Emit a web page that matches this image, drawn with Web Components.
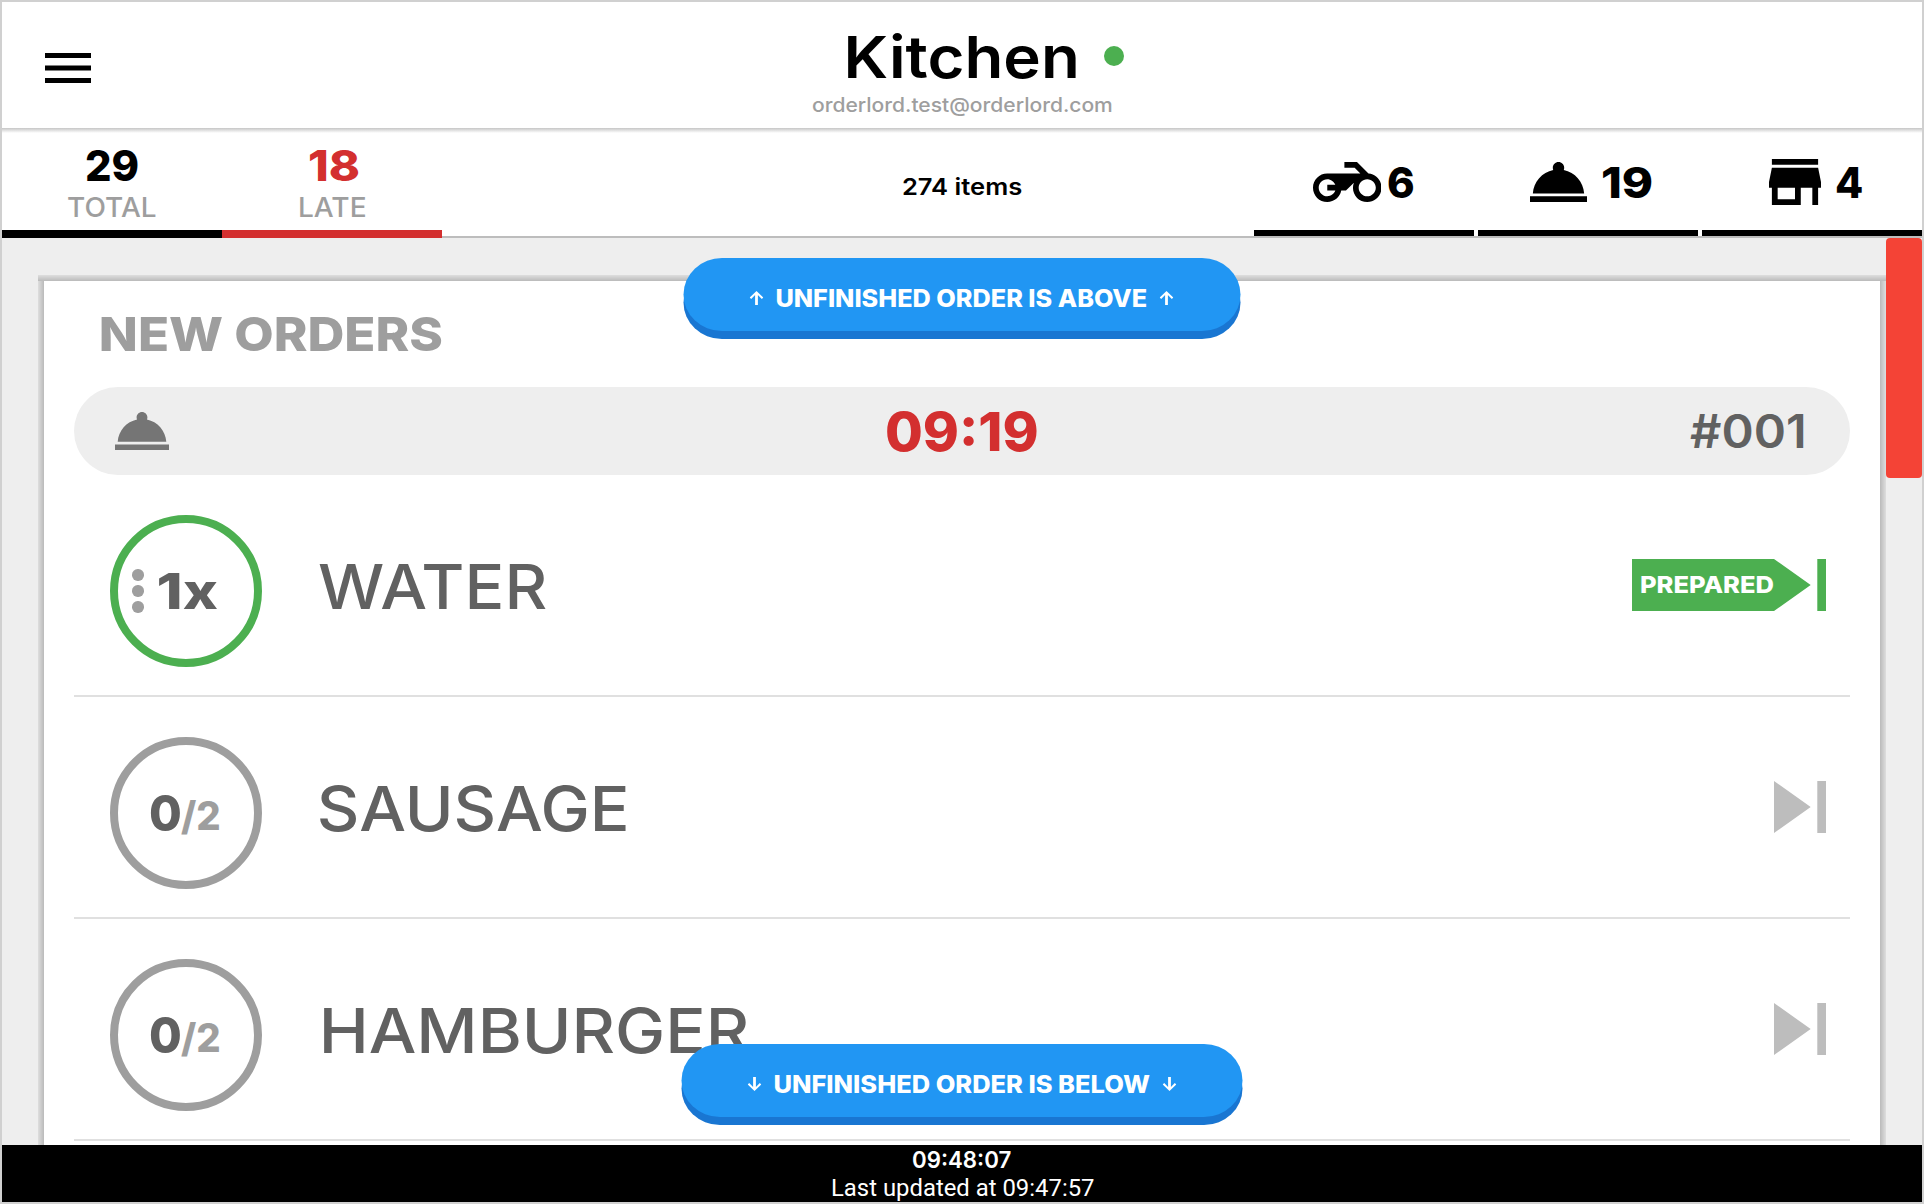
<!DOCTYPE html>
<html lang="en">
<head>
<meta charset="utf-8">
<title>Kitchen</title>
<style>
html,body{margin:0;height:100%;overflow:hidden;font-family:Inter,"Open Sans",sans-serif}
</style>
</head>
<body>
<kitchen-app></kitchen-app>
<script>
const define = (name, html, setup) => {
  const t = document.createElement('template');
  t.innerHTML = html;
  customElements.define(name, class extends HTMLElement {
    connectedCallback() {
      if (this.shadowRoot) return;
      this.attachShadow({mode: 'open'}).append(t.content.cloneNode(true));
      if (setup) setup(this, this.shadowRoot);
    }
  });
};

// Label whose box is as wide as its ink (w) and as tall as its capitals.
const pen = document.createElement('canvas').getContext('2d');
class CapText extends HTMLElement {
  connectedCallback() {
    if (this.shadowRoot) return;
    const size = +this.getAttribute('size'), w = +this.getAttribute('w');
    const weight = this.getAttribute('weight') || 800;
    const font = this.getAttribute('font') || 'Inter';
    const text = this.getAttribute('text');
    const cap = Math.round(size * .727);
    pen.font = `${weight} ${size}px ${font}`;
    const m = pen.measureText(text);
    const s = w / (m.actualBoundingBoxRight + m.actualBoundingBoxLeft);
    this.attachShadow({mode: 'open'}).innerHTML = `<style>
      :host{display:block;flex:none;width:${w}px;height:${cap}px}
      span{display:block;width:max-content;white-space:pre;font:${weight} ${size}px/${cap}px ${font},sans-serif;
        transform-origin:0 50%;transform:translateX(${m.actualBoundingBoxLeft * s}px) scaleX(${s})}
      </style><span></span>`;
    this.shadowRoot.querySelector('span').textContent = text;
  }
}
customElements.define('cap-text', CapText);

const ICONS = {
  menu: ['3 6 18 12', 'M3 18h18v-2H3v2zm0-5h18v-2H3v2zm0-7v2h18V6H3z'],
  bike: ['0 5 24 14', 'M19.44 9.03L15.41 5H11v2h3.59l2 2H5c-2.8 0-5 2.2-5 5s2.2 5 5 5c2.46 0 4.45-1.69 4.9-4h1.65l2.77-2.77c-.21.54-.32 1.14-.32 1.77 0 2.8 2.2 5 5 5s5-2.2 5-5c0-2.65-1.97-4.77-4.56-4.97zM7.82 15C7.4 16.15 6.28 17 5 17c-1.63 0-3-1.37-3-3s1.37-3 3-3c1.28 0 2.4.85 2.82 2H5v2h2.82zM19 17c-1.66 0-3-1.34-3-3s1.34-3 3-3 3 1.34 3 3-1.34 3-3 3z'],
  dome: ['2 5 20 14', 'M2 17h20v2H2zm11.84-9.21c.1-.24.16-.51.16-.79 0-1.1-.9-2-2-2s-2 .9-2 2c0 .28.06.55.16.79C6.25 8.6 3.27 11.93 3 16h18c-.27-4.07-3.25-7.4-7.16-8.21z'],
  store: ['3 4 18 16', 'M20 4H4v2h16V4zm1 10v-2l-1-5H4l-1 5v2h1v6h10v-6h4v6h2v-6h1zm-9 4H6v-4h6v4z'],
  up: ['0 0 14 14', 'M5.6 14V4L1.7 8 .2 6.6 7 0l6.8 6.6L12.3 8 8.4 4V14z'],
  down: ['0 0 14 14', 'M5.6 0v10L1.7 6 .2 7.4 7 14l6.8-6.6L12.3 6 8.4 10V0z']
};
define('ui-icon', `<style>:host{display:block;flex:none}svg{display:block;width:100%;height:100%;fill:currentColor}</style><svg preserveAspectRatio="none"><path/></svg>`, (el, r) => {
  const [box, d] = ICONS[el.getAttribute('name')];
  r.querySelector('svg').setAttribute('viewBox', box);
  r.querySelector('path').setAttribute('d', d);
});

define('app-header', `<style>
:host{display:grid;grid-template-columns:1fr auto 1fr;height:126px;background:#fff;flex:none}
ui-icon{width:46px;height:30px;margin:51px 0 0 43px}
.mid{display:flex;flex-direction:column;align-items:center;width:300px}
.title{display:grid;grid-template-columns:1fr auto 1fr;align-items:center;width:100%;margin-top:34px}
.title cap-text{grid-column:2}
.dot{width:20px;height:20px;border-radius:50%;background:#4caf50;margin:0 -22px 2px 27.5px}
.mail{color:#9e9e9e;margin-top:20px}
</style>
<ui-icon name="menu"></ui-icon>
<div class="mid"><div class="title"><cap-text text="Kitchen" size="58" weight="600" w="228"></cap-text><div class="dot"></div></div>
<cap-text class="mail" text="orderlord.test@orderlord.com" size="20" weight="500" w="300"></cap-text></div>`);

define('stat-tab', `<style>
:host{display:flex;flex-direction:column;align-items:center;width:220px;height:110px;box-sizing:border-box;padding-top:22px;border-bottom:8px solid currentColor}
</style><slot></slot><slot name="label"></slot>`);

define('service-tab', `<style>
:host{display:flex;width:220px;height:108px;box-sizing:border-box;border-bottom:6px solid #000}
</style><slot></slot>`);

define('counter-bar', `<style>
:host{display:grid;grid-template-columns:1fr auto 1fr;height:110px;flex:none;background:linear-gradient(#c6c6c6,#fff) 0 0/100% 5px no-repeat,linear-gradient(#bdbdbd,#bdbdbd) 0 100%/100% 2px no-repeat #fff}
.stats{display:flex}
.late{color:#d32f2f}
.lab{color:#9e9e9e;margin-top:16px}
.items{margin-top:51px}
.services{display:flex;gap:4px;justify-content:flex-end}
</style>
<div class="stats">
<stat-tab><cap-text text="29" size="42.7" w="52"></cap-text><cap-text slot="label" class="lab" text="TOTAL" size="27.5" weight="500" w="88"></cap-text></stat-tab>
<stat-tab class="late"><cap-text style="margin-left:3px" text="18" size="42.7" w="49.5"></cap-text><cap-text slot="label" class="lab" text="LATE" size="27.5" weight="500" w="65"></cap-text></stat-tab>
</div>
<cap-text class="items" text="274 items" size="23" weight="600" w="118.5"></cap-text>
<div class="services">
<service-tab><ui-icon name="bike" style="width:68.5px;height:40px;margin:34px 0 0 58.7px"></ui-icon><cap-text style="margin:39px 0 0 7px" text="6" size="42.7" w="25.5"></cap-text></service-tab>
<service-tab><ui-icon name="dome" style="width:57px;height:40px;margin:34px 0 0 51.6px"></ui-icon><cap-text style="margin:39px 0 0 15px" text="19" size="42.7" w="49.8"></cap-text></service-tab>
<service-tab><ui-icon name="store" style="width:52px;height:46px;margin:31px 0 0 67px"></ui-icon><cap-text style="margin:39px 0 0 15px" text="4" size="42.7" w="26"></cap-text></service-tab>
</div>`);

define('order-head', `<style>
:host{display:grid;grid-template-columns:1fr auto 1fr;align-items:center;height:88px;border-radius:44px;background:#eee;padding:0 46px 0 41px}
ui-icon{width:54px;height:38px;color:#757575}
.time{color:#d32f2f;margin-left:5px}.no{color:#616161;justify-self:end}
</style>
<ui-icon name="dome"></ui-icon>
<cap-text class="time" text="09:19" size="53.6" w="150.2"></cap-text>
<cap-text class="no" text="#001" size="46" weight="600" w="114"></cap-text>`);

define('order-row', `<style>
:host{display:flex;height:222px;box-sizing:border-box;border-bottom:2px solid #e0e0e0;padding:40px 24px 0 36px;color:#616161}
.ring{flex:none;display:flex;width:152px;height:152px;box-sizing:border-box;border:8px solid #9e9e9e;border-radius:50%}
:host([ready]) .ring{border-color:#4caf50}
.next{display:flex;margin:44px 0 0 auto;height:52px;color:#bdbdbd}
:host([ready]) .next{color:#4caf50}
svg{display:block;width:52px;height:52px;fill:currentColor}
</style>
<div class="ring"><slot></slot></div>
<slot name="name"></slot>
<div class="next"><slot name="flag"></slot><svg viewBox="0 0 52 52"><path d="M0 0L36.7 26L0 52zM43.3 0H52V52H43.3z"/></svg></div>`);

define('ready-flag', `<style>:host{display:flex;align-items:center;background:#4caf50;width:142px;height:52px;box-sizing:border-box;padding:0 0 1px 9px;color:#fff}</style><slot></slot>`);

define('ring-dots', `<style>:host{display:flex;flex-direction:column;gap:4.6px;margin:46.3px 0 0 14.3px}i{width:11.4px;height:11.4px;border-radius:50%;background:#9e9e9e}</style><i></i><i></i><i></i>`);

define('part-count', `<style>:host{display:flex;margin:50px 0 0 33.4px;height:36px;align-items:flex-end}.of{color:#9e9e9e}</style><cap-text text="0" size="50" w="29.4"></cap-text><cap-text class="of" text="/2" size="39.5" w="38.6"></cap-text>`);

define('jump-toast', `<style>
:host{position:absolute;left:50%;transform:translateX(-50%);display:flex;height:73px;border-radius:40px/38px;background:#2196f3;box-shadow:0 8px 0 #1976d2;color:#fff}
</style><slot></slot>`);

define('order-card', `<style>
:host{display:block;flex:1;margin:37px 0 0 36px;padding:6px 36px 0;background:
 linear-gradient(#dedede,#bababa) 0 0/100% 6px no-repeat,
 linear-gradient(90deg,#dedede,#bababa) 0 6px/6px 100% no-repeat,
 linear-gradient(90deg,#bababa,#dedede) 100% 6px/6px 100% no-repeat,#fff}
.h{color:#9e9e9e;margin:36px 0 36px 27px}
order-row cap-text[slot=name]{margin-top:49px}
</style>
<cap-text class="h" text="NEW ORDERS" size="46.8" w="341"></cap-text>
<order-head></order-head>
<order-row ready><ring-dots></ring-dots><cap-text style="margin:50px 0 0 15.3px" text="1x" size="49.5" w="58.5"></cap-text>
<cap-text slot="name" style="margin-left:56.5px" text="WATER" size="62" weight="500" w="227"></cap-text>
<ready-flag slot="flag"><cap-text text="PREPARED" size="23.5" weight="800" w="133"></cap-text></ready-flag></order-row>
<order-row><part-count></part-count><cap-text slot="name" style="margin-left:58px" text="SAUSAGE" size="62" weight="500" w="306"></cap-text></order-row>
<order-row><part-count></part-count><cap-text slot="name" style="margin-left:60.8px" text="HAMBURGER" size="62" weight="500" w="425"></cap-text></order-row>`);

define('clock-bar', `<style>
:host{display:flex;flex-direction:column;align-items:center;height:57px;flex:none;background:#000;color:#fff}
.a{margin-top:7px}.b{margin:11px 0 0 2px}
</style>
<cap-text class="a" text="09:48:07" size="23" weight="600" w="98"></cap-text>
<cap-text class="b" text="Last updated at 09:47:57" size="24" weight="400" font="Roboto" w="262"></cap-text>`);

define('kitchen-app', `<style>
:host{display:flex;flex-direction:column;width:1924px;height:1204px;box-sizing:border-box;border:2px solid #d0d0d0;background:#eee;color:#000}
main{position:relative;flex:1;min-height:0;display:flex;overflow:hidden}
.rail{flex:none;width:36px}
.thumb{height:240px;border-radius:4px;background:#f44336}
jump-toast ui-icon{width:14px;height:14px;margin-top:33px}
jump-toast cap-text{margin:32px 13px 0}
</style>
<app-header></app-header>
<counter-bar></counter-bar>
<main>
<order-card></order-card>
<div class="rail"><div class="thumb"></div></div>
<jump-toast style="top:20px;padding:0 67px 0 66px"><ui-icon name="up"></ui-icon><cap-text text="UNFINISHED ORDER IS ABOVE" size="24" w="370"></cap-text><ui-icon name="up"></ui-icon></jump-toast>
<jump-toast style="top:806px;padding:0 66px"><ui-icon name="down"></ui-icon><cap-text text="UNFINISHED ORDER IS BELOW" size="24" w="375"></cap-text><ui-icon name="down"></ui-icon></jump-toast>
</main>
<clock-bar></clock-bar>`);
</script>
</body>
</html>
